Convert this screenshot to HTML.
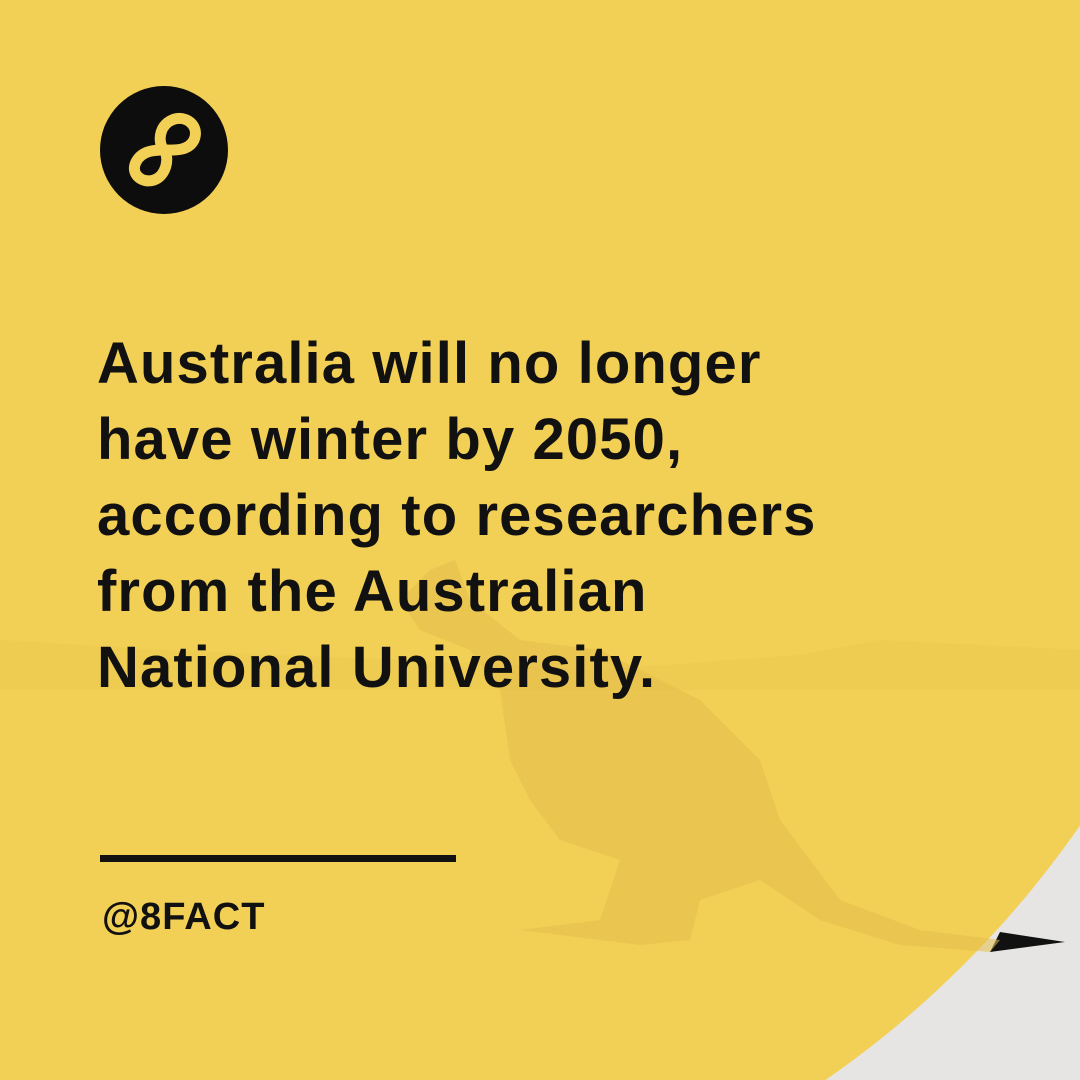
<!DOCTYPE html>
<html><head><style>
html,body{margin:0;padding:0;overflow:hidden;width:1080px;height:1080px}
#w{width:1080px;height:1080px;overflow:hidden;position:relative;background:#e6e5e3;font-family:"Liberation Sans",sans-serif}
.t{position:absolute;left:97px;top:326px;font-size:58px;font-weight:bold;line-height:76px;color:#111;letter-spacing:1.1px}
.r{position:absolute;left:100px;top:855px;width:356px;height:7px;background:#111}
.h{position:absolute;left:102px;top:896px;font-size:38px;font-weight:bold;color:#111;letter-spacing:1px}
</style></head><body><div id="w">
<svg style="position:absolute;left:0;top:0" width="1080" height="1080">
<circle cx="250" cy="250" r="1010" fill="#f2cf55"/>
<path d="M0 640 L160 650 L400 660 L600 670 L800 655 L880 640 L1080 650 L1080 690 L0 690Z" fill="#e9c74e" opacity=".5"/>
<path d="M1000 932 L1065 942 L990 952Z" fill="#111"/>
<path d="M455 560 L470 600 L520 640 L600 650 L700 700 L760 760 L780 820 L840 900 L920 930 L1000 940 L990 952 L900 945 L820 920 L760 880 L700 900 L690 940 L640 945 L520 930 L600 920 L620 860 L560 840 L530 800 L510 760 L500 690 L470 650 L420 630 L400 600 L430 570Z" fill="#e3c04c" opacity=".55"/>
</svg>
<svg style="position:absolute;left:100px;top:86px" width="128" height="128" viewBox="0 0 128 128">
<circle cx="64" cy="64" r="64" fill="#0d0d0d"/>
<path d="M64 64 C58 58 58 40 72 34 C86 28 100 40 94 54 C88 66 72 64 64 64 C56 64 42 64 36 76 C30 88 42 98 54 94 C66 90 70 72 64 64Z" fill="none" stroke="#f2cf55" stroke-width="11"/>
</svg>
<div class="t">Australia will no longer<br>have winter by 2050,<br>according to researchers<br>from the Australian<br>National University.</div>
<div class="r"></div>
<div class="h">@8FACT</div>
</div></body></html>
